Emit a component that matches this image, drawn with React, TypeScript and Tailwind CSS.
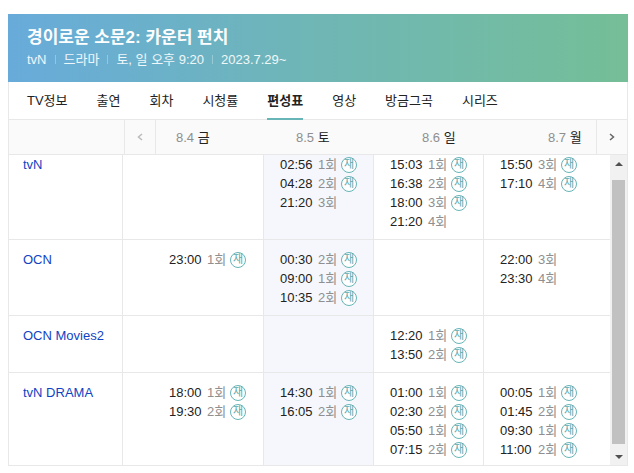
import { useState } from "react";

type Airing = { time: string; episode: number; rerun?: boolean };
type Channel = { name: string; days: Airing[][] };

const tabs = ["TV정보", "출연", "회차", "시청률", "편성표", "영상", "방금그곡", "시리즈"];

const days = [
  { date: "8.4", day: "금" },
  { date: "8.5", day: "토" },
  { date: "8.6", day: "일" },
  { date: "8.7", day: "월" },
];

const re = (time: string, episode: number): Airing => ({ time, episode, rerun: true });

const channels: Channel[] = [
  {
    name: "tvN",
    days: [
      [],
      [re("02:56", 1), re("04:28", 2), { time: "21:20", episode: 3 }],
      [re("15:03", 1), re("16:38", 2), re("18:00", 3), { time: "21:20", episode: 4 }],
      [re("15:50", 3), re("17:10", 4)],
    ],
  },
  {
    name: "OCN",
    days: [
      [re("23:00", 1)],
      [re("00:30", 2), re("09:00", 1), re("10:35", 2)],
      [],
      [
        { time: "22:00", episode: 3 },
        { time: "23:30", episode: 4 },
      ],
    ],
  },
  {
    name: "OCN Movies2",
    days: [[], [], [re("12:20", 1), re("13:50", 2)], []],
  },
  {
    name: "tvN DRAMA",
    days: [
      [re("18:00", 1), re("19:30", 2)],
      [re("14:30", 1), re("16:05", 2)],
      [re("01:00", 1), re("02:30", 2), re("05:50", 1), re("07:15", 2)],
      [re("00:05", 1), re("01:45", 2), re("09:30", 1), re("11:00", 2)],
    ],
  },
];

const cellStyles = ["pl-[46px]", "pl-4 bg-[#f5f7fc]", "pl-4", "pl-4"];

const AiringRow = ({ airing }: { airing: Airing }) => (
  <li className="flex h-[19px] items-center whitespace-nowrap">
    <span className="w-[38px] text-[#222]">{airing.time}</span>
    <span className="w-[23px] text-[#8f8f8f]">{airing.episode}회</span>
    {airing.rerun && (
      <span className="flex h-4 w-4 items-center justify-center rounded-full border border-[#67b5b7] bg-white text-[11px] leading-none text-[#5ba9ad]">
        재
      </span>
    )}
  </li>
);

const Arrow = ({ d, className }: { d: string; className: string }) => (
  <svg viewBox="0 0 6 8" className={className} fill="none" stroke="currentColor" strokeWidth="1.5" aria-hidden="true">
    <path d={d} />
  </svg>
);

const Divider = () => <span className="h-[9px] w-px bg-white/30" />;

const App = () => {
  const [activeTab, setActiveTab] = useState("편성표");

  return (
    <div className="pt-3.5 pr-1.5 pl-2 text-[13px] leading-[19px] font-['Liberation_Sans','Noto_Sans_CJK_KR',sans-serif]">
      {/* Title */}
      <header className="bg-linear-to-r from-[#68abdb] via-[#6fb6b5] to-[#75be97] px-[19px] pt-3 pb-3.5 text-white">
        <h1 className="text-[17px] leading-6 font-bold">경이로운 소문2: 카운터 펀치</h1>
        <div className="flex h-[18px] items-center gap-2 text-white/90">
          <span>tvN</span>
          <Divider />
          <span>드라마</span>
          <Divider />
          <span>토, 일 오후 9:20</span>
          <Divider />
          <span>2023.7.29~</span>
        </div>
      </header>

      <div className="border-x border-b border-[#e8e8e8]">
        {/* Tabs */}
        <nav className="flex gap-[29px] border-b border-[#e8e8e8] px-[18px]">
          {tabs.map((tab) => (
            <button
              key={tab}
              type="button"
              onClick={() => setActiveTab(tab)}
              className={`-mb-px h-[38px] border-b-2 whitespace-nowrap text-[#222] ${
                activeTab === tab ? "border-[#67b5b7] font-bold" : "border-transparent"
              }`}
            >
              {tab}
            </button>
          ))}
        </nav>

        {/* Days */}
        <div className="flex h-[35px] border-b border-[#e8e8e8] bg-[#fafafa]">
          <div className="w-[115px]" />
          <button
            type="button"
            aria-label="이전"
            className="flex w-8 items-center justify-center border-x border-[#e8e8e8] text-[#bbb]"
          >
            <Arrow d="M5 1 1.5 4 5 7" className="h-2 w-1.5" />
          </button>
          <div className="grid flex-1 grid-cols-[120fr_126fr_126fr_68fr] items-center">
            {days.map(({ date, day }) => (
              <div key={date} className="pl-5 whitespace-nowrap text-[#8f8f8f]">
                {date} <span className="text-[#222]">{day}</span>
              </div>
            ))}
          </div>
          <button
            type="button"
            aria-label="다음"
            className="flex w-[31px] items-center justify-center border-l border-[#e8e8e8] text-[#666]"
          >
            <Arrow d="M1 1 4.5 4 1 7" className="h-2 w-1.5" />
          </button>
        </div>

        {/* Schedule */}
        <div className="flex">
          <table className="flex-1 table-fixed border-separate border-spacing-0">
            <colgroup>
              <col className="w-[114px]" />
              <col className="w-[141px]" />
              <col className="w-[110px]" />
              <col className="w-[110px]" />
              <col className="w-[126px]" />
            </colgroup>
            <tbody className="[&>tr:first-child>*]:pt-0 [&>tr:last-child>*]:border-b-0 [&>tr:last-child>*]:pb-1.5">
              {channels.map((channel) => (
                <tr key={channel.name}>
                  <th
                    scope="row"
                    className="border-r border-b border-[#e8e8e8] pt-2.5 pb-2 pl-3.5 text-left align-top font-normal whitespace-nowrap"
                  >
                    <a href="#" className="text-[#0f43c4]">
                      {channel.name}
                    </a>
                  </th>
                  {channel.days.map((airings, index) => (
                    <td
                      key={index}
                      className={`border-r border-b border-[#e8e8e8] pt-2.5 pb-2 align-top last:border-r-0 ${cellStyles[index]}`}
                    >
                      <ul>
                        {airings.map((airing) => (
                          <AiringRow key={airing.time} airing={airing} />
                        ))}
                      </ul>
                    </td>
                  ))}
                </tr>
              ))}
            </tbody>
          </table>

          <div className="flex w-[17px] flex-col bg-[#f1f1f1]">
            <button type="button" aria-label="위로" className="flex h-[17px] items-center justify-center">
              <svg viewBox="0 0 8 4" className="h-1 w-2" fill="#505050" aria-hidden="true">
                <path d="M4 0 8 4H0Z" />
              </svg>
            </button>
            <div className="mx-0.5 mt-2 mb-1 flex-1 bg-[#c1c1c1]" />
            <button type="button" aria-label="아래로" className="flex h-[17px] items-center justify-center">
              <svg viewBox="0 0 8 4" className="h-1 w-2" fill="#505050" aria-hidden="true">
                <path d="M0 0H8L4 4Z" />
              </svg>
            </button>
          </div>
        </div>
      </div>
    </div>
  );
};

export default App;
